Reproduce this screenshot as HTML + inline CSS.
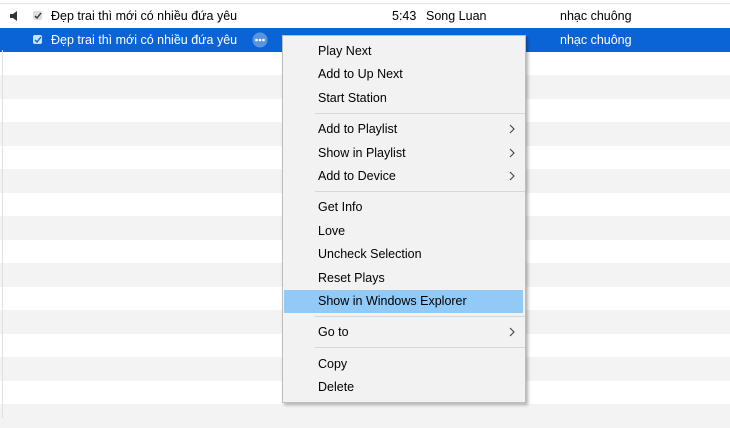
<!DOCTYPE html>
<html><head><meta charset="utf-8"><style>
body{margin:0;width:730px;height:418px;overflow:hidden;background:#fff;font-family:"Liberation Sans",sans-serif;font-size:12.5px;color:#000;position:relative}
.top{position:absolute;left:0;top:0;width:730px;height:3px;border-bottom:1px solid #e6e6e6}
.lb{position:absolute;left:2px;top:50px;width:1px;height:368px;background:#e0e0e0;z-index:2}
.row{position:absolute;left:0;width:730px;height:23.5px}
.g{background:#f3f3f3}
.sel{background:#0a64d6;color:#fff}
.t{position:absolute;top:5px;white-space:nowrap}
.cb{position:absolute;left:33px;top:7px;width:9px;height:9px;background:#ddd;border-radius:2px}
.sel .cb{background:#cfe0f7}
.menu{position:absolute;left:282px;top:35px;width:242px;height:366px;background:#f2f2f2;border:1px solid #bdbdbd;box-shadow:2px 2px 3px rgba(0,0,0,.3);z-index:3}
.mi{position:absolute;left:35px;white-space:nowrap;font-size:12.5px}
.ar{position:absolute;left:226px}
.sep{position:absolute;left:32px;width:210px;height:1px;background:#d6d6d6}
.hl{position:absolute;left:1px;top:254px;width:239px;height:23px;background:#91c9f7}
</style></head><body>
<div class="top"></div>
<div class="lb"></div>
<div class="row" style="top:4px">
<svg style="position:absolute;left:10px;top:7px" width="8" height="10"><path d="M0 3h3l4-3v10l-4-3H0z" fill="#333"/></svg>
<div class="cb"></div><svg style="position:absolute;left:34px;top:8px" width="8" height="8"><path d="M1 4l2 2 4-5" stroke="#333" stroke-width="1.4" fill="none"/></svg>
<span class="t" style="left:51px">Đẹp trai thì mới có nhiều đứa yêu</span>
<span class="t" style="left:392px">5:43</span><span class="t" style="left:426px">Song Luan</span><span class="t" style="left:560px">nhạc chuông</span></div>
<div class="row sel" style="top:28px">
<div class="cb"></div><svg style="position:absolute;left:34px;top:8px" width="8" height="8"><path d="M1 4l2 2 4-5" stroke="#0a64d6" stroke-width="1.4" fill="none"/></svg>
<span class="t" style="left:51px">Đẹp trai thì mới có nhiều đứa yêu</span>
<svg style="position:absolute;left:252px;top:4px" width="16" height="16"><circle cx="8" cy="8" r="7.5" fill="#5b95e0"/><circle cx="4.5" cy="8" r="1.3" fill="#fff"/><circle cx="8" cy="8" r="1.3" fill="#fff"/><circle cx="11.5" cy="8" r="1.3" fill="#fff"/></svg>
<span class="t" style="left:560px">nhạc chuông</span></div>
<div class="row g" style="top:75px"></div>
<div class="row g" style="top:122px"></div>
<div class="row g" style="top:169px"></div>
<div class="row g" style="top:216px"></div>
<div class="row g" style="top:263px"></div>
<div class="row g" style="top:310px"></div>
<div class="row g" style="top:357px"></div>
<div class="row g" style="top:404px"></div>
<div class="menu">
<div class="hl"></div>
<span class="mi" style="top:8px">Play Next</span>
<span class="mi" style="top:31px">Add to Up Next</span>
<span class="mi" style="top:55px">Start Station</span>
<div class="sep" style="top:77px"></div>
<span class="mi" style="top:86px">Add to Playlist</span><svg class="ar" style="top:88px" width="6" height="10"><path d="M1 1l4 4-4 4" stroke="#444" stroke-width="1.1" fill="none"/></svg>
<span class="mi" style="top:110px">Show in Playlist</span><svg class="ar" style="top:112px" width="6" height="10"><path d="M1 1l4 4-4 4" stroke="#444" stroke-width="1.1" fill="none"/></svg>
<span class="mi" style="top:133px">Add to Device</span><svg class="ar" style="top:135px" width="6" height="10"><path d="M1 1l4 4-4 4" stroke="#444" stroke-width="1.1" fill="none"/></svg>
<div class="sep" style="top:155px"></div>
<span class="mi" style="top:164px">Get Info</span>
<span class="mi" style="top:188px">Love</span>
<span class="mi" style="top:211px">Uncheck Selection</span>
<span class="mi" style="top:235px">Reset Plays</span>
<span class="mi" style="top:258px">Show in Windows Explorer</span>
<div class="sep" style="top:280px"></div>
<span class="mi" style="top:289px">Go to</span><svg class="ar" style="top:291px" width="6" height="10"><path d="M1 1l4 4-4 4" stroke="#444" stroke-width="1.1" fill="none"/></svg>
<div class="sep" style="top:311px"></div>
<span class="mi" style="top:321px">Copy</span>
<span class="mi" style="top:344px">Delete</span>
</div>
</body></html>
